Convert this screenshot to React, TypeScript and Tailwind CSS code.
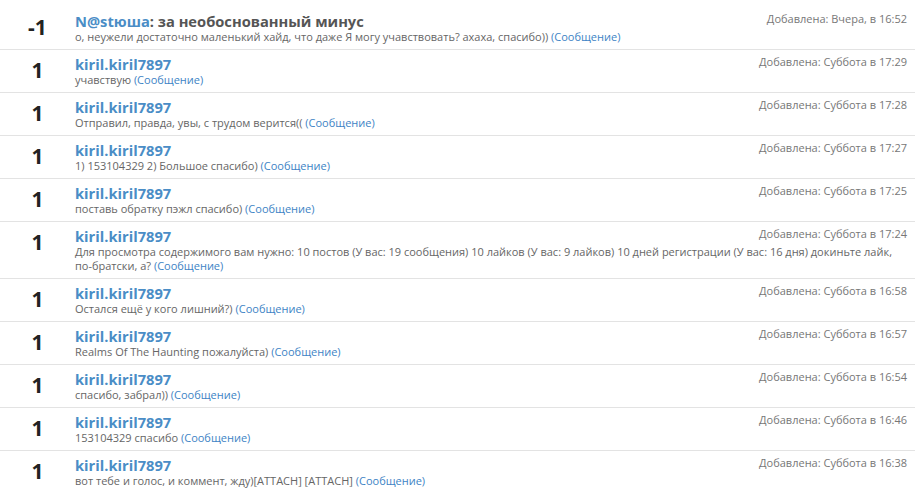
const rows = [
  {
    score: "-1",
    user: "N@stюша",
    title: "за необоснованный минус",
    text: "о, неужели достаточно маленький хайд, что даже Я могу учавствовать? ахаха, спасибо))",
    date: "Добавлена: Вчера, в 16:52",
  },
  { score: "1", user: "kiril.kiril7897", text: "учавствую", date: "Добавлена: Суббота в 17:29" },
  { score: "1", user: "kiril.kiril7897", text: "Отправил, правда, увы, с трудом верится((", date: "Добавлена: Суббота в 17:28" },
  { score: "1", user: "kiril.kiril7897", text: "1) 153104329 2) Большое спасибо)", date: "Добавлена: Суббота в 17:27" },
  { score: "1", user: "kiril.kiril7897", text: "поставь обратку пэжл спасибо)", date: "Добавлена: Суббота в 17:25" },
  {
    score: "1",
    user: "kiril.kiril7897",
    text: "Для просмотра содержимого вам нужно: 10 постов (У вас: 19 сообщения) 10 лайков (У вас: 9 лайков) 10 дней регистрации (У вас: 16 дня) докиньте лайк, по-братски, а?",
    date: "Добавлена: Суббота в 17:24",
  },
  { score: "1", user: "kiril.kiril7897", text: "Остался ещё у кого лишний?)", date: "Добавлена: Суббота в 16:58" },
  { score: "1", user: "kiril.kiril7897", text: "Realms Of The Haunting пожалуйста)", date: "Добавлена: Суббота в 16:57" },
  { score: "1", user: "kiril.kiril7897", text: "спасибо, забрал))", date: "Добавлена: Суббота в 16:54" },
  { score: "1", user: "kiril.kiril7897", text: "153104329 спасибо", date: "Добавлена: Суббота в 16:46" },
  { score: "1", user: "kiril.kiril7897", text: "вот тебе и голос, и коммент, жду)[ATTACH] [ATTACH]", date: "Добавлена: Суббота в 16:38" },
];

export default function App() {
  return (
    <div className="min-h-screen bg-white font-['Open_Sans',sans-serif]">
      <ol className="mr-2 pt-[7px]">
        {rows.map((row, i) => (
          <li key={i} className="flex border-b border-[#e3e3e3] last:border-b-0">
            <div className="w-[75px] shrink-0 pt-[5px] text-center text-[21px] font-bold leading-[31px] text-[#222]">
              {row.score}
            </div>
            <div className="min-w-0 flex-1 pt-[5px] pb-[5px] pr-2">
              <div className="flex items-start justify-between">
                <h3 className="text-[14.7px] font-bold leading-[18px]">
                  <a className="text-[#4a8dc6]">{row.user}</a>
                  {row.title && <span className="text-[#555]">: {row.title}</span>}
                </h3>
                <span className="text-[11px] leading-[14px] text-[#777]">{row.date}</span>
              </div>
              <p className="text-[11px] leading-[14px] text-[#666]">
                {row.text} <a className="text-[#3d83c5]">(Сообщение)</a>
              </p>
            </div>
          </li>
        ))}
      </ol>
    </div>
  );
}
